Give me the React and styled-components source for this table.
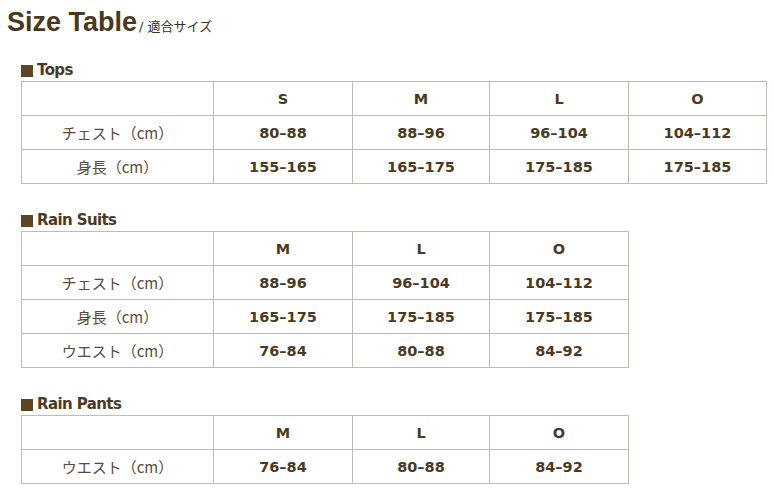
import React from "react";
import styled, { createGlobalStyle } from "styled-components";

const GlobalStyle = createGlobalStyle`
  body {
    margin: 0;
    background: #fff;
    font-family: "DejaVu Sans", sans-serif;
  }
`;

const tables = [
  {
    title: "Tops",
    sizes: ["S", "M", "L", "O"],
    rows: [
      { label: "チェスト（cm）", values: ["80–88", "88–96", "96–104", "104–112"] },
      { label: "身長（cm）", values: ["155–165", "165–175", "175–185", "175–185"] },
    ],
  },
  {
    title: "Rain Suits",
    sizes: ["M", "L", "O"],
    rows: [
      { label: "チェスト（cm）", values: ["88–96", "96–104", "104–112"] },
      { label: "身長（cm）", values: ["165–175", "175–185", "175–185"] },
      { label: "ウエスト（cm）", values: ["76–84", "80–88", "84–92"] },
    ],
  },
  {
    title: "Rain Pants",
    sizes: ["M", "L", "O"],
    rows: [{ label: "ウエスト（cm）", values: ["76–84", "80–88", "84–92"] }],
  },
];

const colWidths = [192, 139, 137, 139, 138];

const SizeTable = () => {
  return (
    <Page>
      <GlobalStyle />
      <Title>
        Size Table<Sub>/ 適合サイズ</Sub>
      </Title>
      {tables.map((t) => (
        <Section key={t.title}>
          <Heading>{t.title}</Heading>
          <Grid>
            <colgroup>
              {colWidths.slice(0, t.sizes.length + 1).map((w, i) => (
                <col key={i} style={{ width: w }} />
              ))}
            </colgroup>
            <tbody>
              <tr>
                <Cell />
                {t.sizes.map((s) => (
                  <Cell key={s}>{s}</Cell>
                ))}
              </tr>
              {t.rows.map((r) => (
                <tr key={r.label}>
                  <Cell $label>{r.label}</Cell>
                  {r.values.map((v, i) => (
                    <Cell key={i}>{v}</Cell>
                  ))}
                </tr>
              ))}
            </tbody>
          </Grid>
        </Section>
      ))}
    </Page>
  );
};

//Styles
const Page = styled.div`
  width: 774px;
  padding: 7px 0 0 0;
  box-sizing: border-box;
`;

const Title = styled.h1`
  margin: 0 0 0 7px;
  font-family: "Liberation Sans", Arial, sans-serif;
  font-weight: bold;
  font-size: 27px;
  line-height: 30px;
  color: #4a3819;
  display: flex;
  align-items: baseline;
`;

const Sub = styled.span`
  margin-left: 2px;
  font-family: "DejaVu Sans", "Noto Sans CJK JP", sans-serif;
  font-weight: normal;
  font-size: 13px;
  color: #3a3020;
`;

const Section = styled.section`
  margin: 19px 0 0 21px;
  & + & {
    margin-top: 27px;
  }
`;

const Heading = styled.h2`
  margin: 0 0 2px;
  font-family: "DejaVu Sans", sans-serif;
  font-weight: bold;
  font-size: 15px;
  line-height: 18px;
  letter-spacing: -0.6px;
  color: #4b3a1f;
  display: flex;
  align-items: center;
  &::before {
    content: "";
    width: 12px;
    height: 12px;
    margin: 1px 4px 0 0;
    background: #5c4525;
  }
`;

const Grid = styled.table`
  border-collapse: collapse;
  table-layout: fixed;
  border: 1px solid #c2bbb1;
`;

const Cell = styled.td`
  height: 33px;
  padding: 0;
  border: 1px solid #c2bbb1;
  text-align: center;
  vertical-align: middle;
  font-family: ${(p) =>
    p.$label ? `"Noto Sans CJK JP", sans-serif` : `"DejaVu Sans", sans-serif`};
  font-weight: ${(p) => (p.$label ? "normal" : "bold")};
  font-size: ${(p) => (p.$label ? "15px" : "14.5px")};
  color: ${(p) => (p.$label ? "#5a4a38" : "#4b3a1f")};
`;

export default SizeTable;
